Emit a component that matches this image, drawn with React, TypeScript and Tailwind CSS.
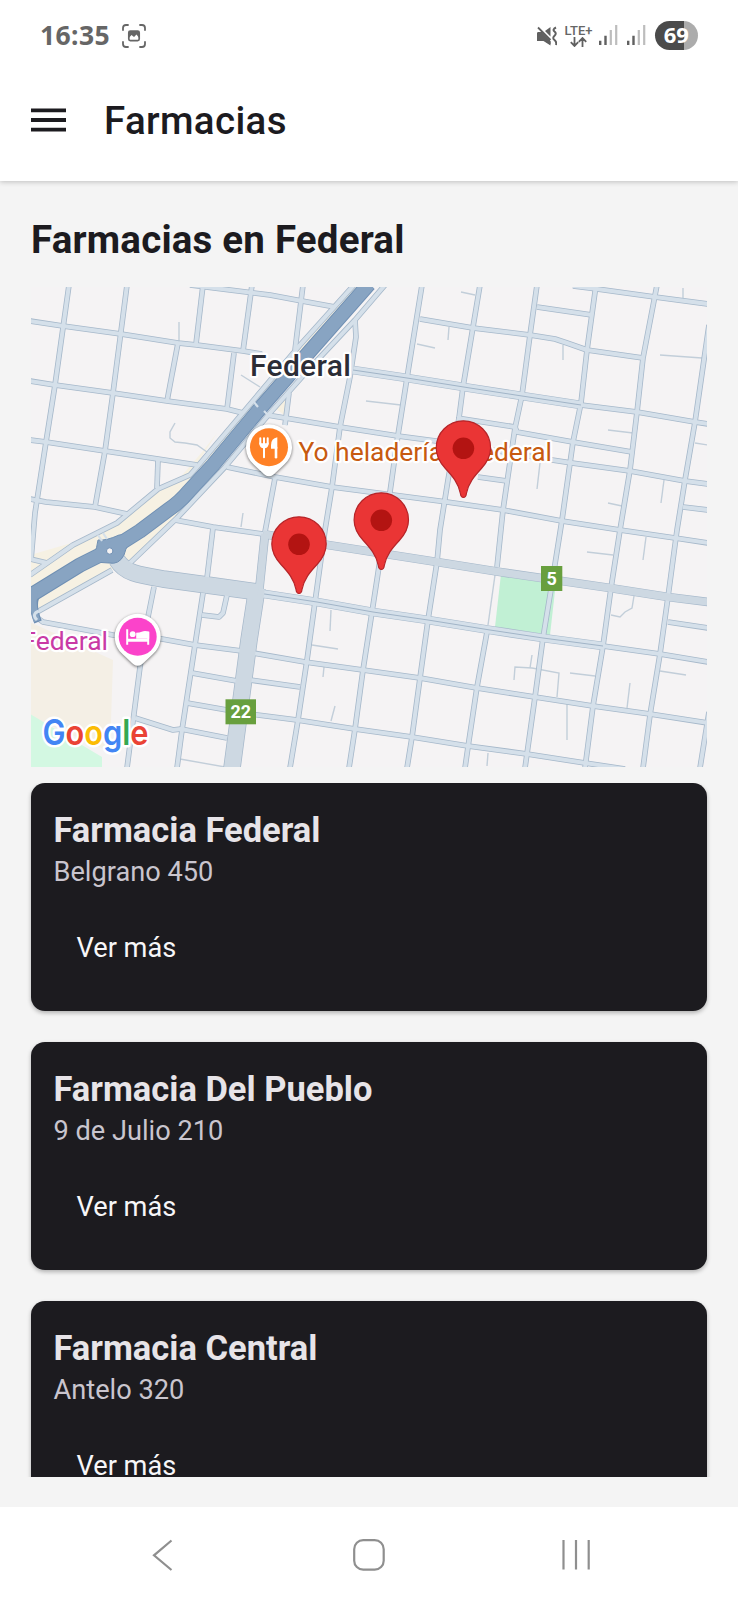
import React from "react";

const streets: string[] = [
  // north-west blocks
  "30,321 63,326 121,334 178,343 197,345 243,351 262,354",
  "190,285 230,290 270,295 302,301 335,307",
  "30,381 55,385 113,393 167,401 227,409 243,413",
  "30,440 46,442 105,451 158,459 197,465",
  "30,499 46,502 95,507 127,514",
  "69,285 55,385 46,442 35,513 31,560",
  "127,285 113,393 105,451 95,507",
  "178,343 167,401",
  "203,285 196,344",
  "252,285 243,351",
  "234,353 227,409",
  "158,460 157,488",
  "303,285 295,350",
  "30,559 47,563",
  // frontage roads
  "354,285 300,345 252,402 197,467 190,475 158,489 117,523 73,545 30,575",
  "385,285 355,320 310,368 270,413 225,467 177,518 130,563",
  "112,570 37,612 36,617 43,622 113,635 162,639 195,645 242,651",
  // long verticals
  "289,393 285,425",
  "355,320 356,337 350,377 340,427 332,487 325,530 315,602 307,660 298,720 290,768",
  "422,285 407,378 398,435 390,492 378,573 372,612 363,670 355,729 349,768",
  "480,285 463,387 459,418 448,480 440,530 437,562 428,620 420,678 412,737 407,768",
  "537,285 530,335 522,395 515,428 503,510 497,567",
  "487,632 477,687 468,747 465,768",
  "596,285 587,350 581,403 573,442 562,520 552,583 543,638 535,697 525,768",
  "657,285 643,358 637,412 630,470 620,530 611,588 603,646 593,706 585,768",
  "709,325 695,422 685,480 677,530 668,597 660,654 650,715 643,768",
  "709,712 700,768",
  "275,478 265,532",
  "213,528 207,578",
  "154,587 148,617 140,667 127,768",
  "203,593 195,645 182,730 177,768",
  "227,595 223,613 219,617 202,615",
  // long horizontals
  "573,286 597,289 655,297 708,304",
  "537,307 592,315",
  "420,319 473,328 530,335 555,339 567,343 587,350 643,358",
  "581,405 637,412 695,422 708,424",
  "267,415 340,427 398,436 436,441 480,448 552,460 572,463 630,471 685,481 708,484",
  "457,418 515,427 517,432 573,442 632,452",
  "478,477 507,481",
  "227,467 275,477 332,487 447,502 503,510 562,521 620,530 675,538 708,543",
  "683,507 708,510",
  "668,622 708,628",
  "603,646 660,654 708,662",
  "253,653 305,662 363,670 420,678 477,688 535,697 593,706 650,714 708,723",
  "192,673 237,681",
  "250,680 300,687",
  "187,703 250,714 297,720 355,729 412,737 468,746 527,754 585,763 625,769",
  "135,718 173,730 181,729 227,738",
  "175,520 213,527 263,534",
];

const doubles: string[] = [
  "353,370 407,378 470,388 522,396 581,405",
  "258,593 317,602 373,612 428,620 490,630 543,638 603,646",
];

const paths: string[] = [
  "179,322 179,342", "241,375 260,387", "175,423 170,432 170,438 175,442 185,443 197,445 207,452",
  "461,292 475,295", "417,344 435,348", "449,327 448,340", "366,401 401,405",
  "563,345 563,360", "683,288 683,298", "660,355 702,358", "608,430 633,433",
  "540,463 537,489", "608,503 622,506", "664,480 661,503", "695,443 708,445",
  "331,610 330,631", "312,645 338,649", "324,667 323,677", "335,706 331,721",
  "243,513 241,527", "587,552 613,555", "646,537 643,560",
  "634,596 632,608 625,612 620,617 611,615",
  "495,575 488,625", "514,680 515,667 532,668 559,673 557,697", "532,655 530,668",
  "570,673 595,676", "630,683 627,708", "660,671 686,675", "567,704 567,740",
  "488,753 487,766", "180,759 225,767",
];

const avenue = "M369 284L310 351L263 405L213 465L189 491Q180 502 168 510L140 531L110 550L80 565L28 597";
const routeWest = "M117 560C125 573 138 575 163 579L207 585L258 592";

function Pin({ x, y }: { x: number; y: number }) {
  return (
    <g transform={`translate(${x} ${y})`}>
      <path
        d="M0-.6C-2-.6-2.8-2.5-3-4.5C-5-15-11-22-18-29.5C-24-36-27.2-42-27.2-50A27.2 27.2 0 0 1 27.2-50C27.2-42 24-36 18-29.5C11-22 5-15 3-4.5C2.8-2.5 2-.6 0-.6Z"
        fill="#ea3535"
        stroke="#b62428"
        strokeWidth="1.2"
      />
      <circle cy="-49.7" r="10.8" fill="#b31412" />
    </g>
  );
}

function PlaceMarker({ x, y, color, children }: { x: number; y: number; color: string; children: React.ReactNode }) {
  return (
    <g transform={`translate(${x} ${y})`}>
      <g style={{ filter: "drop-shadow(0 1px 1.5px rgb(0 0 0 / .55))" }}>
        <path
          d="M0 29C-3 29-5 27-7 25L-15 17.5A23 23 0 1 1 15 17.5L7 25C5 27 3 29 0 29Z"
          fill="#fff"
        />
      </g>
      <circle r="19" fill={color} />
      {children}
    </g>
  );
}

function RouteShield({ x, y, w, label }: { x: number; y: number; w: number; label: string }) {
  return (
    <g>
      <rect x={x} y={y} width={w} height="25" fill="#689f3e" />
      <text x={x + w / 2} y={y + 18.8} textAnchor="middle" fill="#fff" className="font-[Roboto,sans-serif] text-[18px] font-bold">
        {label}
      </text>
    </g>
  );
}

function CityMap() {
  return (
    <svg viewBox="31 287 676 480" className="block h-[480px] w-[676px] bg-[#f5f3f4]">
      {/* land areas */}
      <path d="M30 622L80 645L113 660L110 752L30 716Z" fill="#f4efe5" />
      <path d="M30 714L60 732L102 757V768H30Z" fill="#d3f8e2" />
      <path d="M217 433L203 451L178 480L190 475L252 402L354 287H369L189 491L177 518L130 563L112 570L37 612H30V575V555L75 542L117 523L158 489L190 475Z" fill="#f6f1e3" />
      <path d="M290 390L275 408L284 415Z" fill="#f6f0e1" />
      <path d="M501 574L556 582L550 635L495 627Z" fill="#c1f0d4" />

      <g fill="none" stroke="#c2ced9" strokeWidth="1.4">
        {paths.map((p) => <polyline key={p} points={p} />)}
      </g>

      <g fill="none" strokeLinejoin="round">
        <g stroke="#a6b8ca" strokeWidth="5.6">
          {streets.map((p) => <polyline key={p} points={p} />)}
        </g>
        <g stroke="#a6b8ca" strokeWidth="8.8">
          {doubles.map((p) => <polyline key={p} points={p} />)}
          <polyline points="263,534 328,545 437,562 500,572 610,588 668,597 708,602" />
          <polyline points="265,534 259,592" />
        </g>
        <polyline points="257,588 249,640 232,768" stroke="#a6b8ca" strokeWidth="17.5" />
        <path d={routeWest} stroke="#a6b8ca" strokeWidth="17.5" />

        <g stroke="#d5e0ea" strokeWidth="4">
          {streets.map((p) => <polyline key={p} points={p} />)}
        </g>
        <g stroke="#d5e0ea" strokeWidth="7.4">
          {doubles.map((p) => <polyline key={p} points={p} />)}
        </g>
        <g stroke="#a1b4c7" strokeWidth="1">
          {doubles.map((p) => <polyline key={p} points={p} />)}
        </g>
        <g stroke="#cdd8e2" strokeWidth="7.4">
          <polyline points="263,534 328,545 437,562 500,572 610,588 668,597 708,602" />
          <polyline points="265,534 259,592" />
        </g>
        <polyline points="257,588 249,640 232,768" stroke="#cdd8e2" strokeWidth="16" />
        <path d={routeWest} stroke="#cdd8e2" strokeWidth="16" />

        <g stroke="#6f8fb3">
          <path d={avenue} strokeWidth="15" />
          <path d="M38 592Q30 603 38 622" strokeWidth="8" />
        </g>
        <path d="M86 562Q96 557 98 540Q106 541 119 535L136 534Q127 543 124 555Q119 565 109 563Q98 562 86 562Z" fill="#88a4c2" stroke="#6f8fb3" />
        <path d={avenue} stroke="#88a4c2" strokeWidth="13.2" />
        <path d="M35 590Q31 603 37 621" stroke="#88a4c2" strokeWidth="6.5" />
        <path d="M98 535L102 541M103 533L107 539M253 401L258 407M264 411L269 416" stroke="#d5e0ea" strokeWidth="2.2" />
        <path d="M37 620Q31 614 39 611" stroke="#d5e0ea" strokeWidth="3" />
      </g>
      <circle cx="109.7" cy="551" r="3.2" fill="#f5f3f4" stroke="#6f8fb3" />

      <RouteShield x={225.5} y={699.3} w={30.5} label="22" />
      <RouteShield x={541} y={566} w={21.3} label="5" />

      {/* labels */}
      <g strokeLinejoin="round" className="font-[Roboto,sans-serif]" style={{ paintOrder: "stroke" }}>
        <text x="250" y="375.5" textLength="101" fill="#2c2d36" stroke="#fff" strokeWidth="4.5" className="text-[30px] font-medium">Federal</text>
        <text y="460.5" fill="#c75a10" stroke="#fff" strokeWidth="4.5" className="text-[26.4px]">
          <tspan x="298.5">Yo heladería </tspan>
          <tspan x="552" textAnchor="end">Federal</tspan>
        </text>
        <text x="108" y="650" textAnchor="end" fill="#c93aa5" stroke="#fff" strokeWidth="4.5" className="text-[26.5px]">Federal</text>
      </g>

      <PlaceMarker x={269} y={447.3} color="#ff8126">
        <g fill="none" stroke="#fff" strokeLinecap="round" strokeWidth="2">
          <path d="M-8.7-9V-3.5M-5-9V-3.5M-1.3-9V-3.5M-5-1V10" />
          <path d="M-8.7-4Q-8.7 0-5 0T-1.3-4" fill="#fff" />
          <path d="M7 0V10" strokeWidth="2.6" />
        </g>
        <path d="M8.3-10Q2-9 2-2V1.5H8.3Z" fill="#fff" />
      </PlaceMarker>
      <PlaceMarker x={137.7} y={636.7} color="#fb43ca">
        <g fill="#fff">
          <path d="M-11.5-7.5H-9.5V2H9.5V-5H11.5V8H9.5V5H-9.5V8H-11.5Z" />
          <circle cx="-5" cy="-2.5" r="2.9" />
          <path d="M-1.5 1V-4Q2-4 4-5Q7-6.5 11.5-5V2H-1.5Z" />
        </g>
      </PlaceMarker>

      <text x="42.5" y="745" textLength="106" lengthAdjust="spacingAndGlyphs" stroke="#fff" strokeWidth="5" strokeLinejoin="round" className="font-[Inter,sans-serif] text-[35px] font-semibold" style={{ paintOrder: "stroke" }}>
        <tspan fill="#4285f4">G</tspan>
        <tspan fill="#ea4335">o</tspan>
        <tspan fill="#fbbc05">o</tspan>
        <tspan fill="#4285f4">g</tspan>
        <tspan fill="#34a853">l</tspan>
        <tspan fill="#ea4335">e</tspan>
      </text>

      <Pin x={463.4} y={498} />
      <Pin x={381.3} y={570} />
      <Pin x={299} y={594} />
    </svg>
  );
}

function SignalBars() {
  return (
    <svg viewBox="0 0 19 20" className="h-5 w-[19px]">
      <path d="M1.2 15.7V20M6.5 10.7V20" stroke="#606060" strokeWidth="2.4" />
      <path d="M11.8 5V20M17.2 0V20" stroke="#bdbdbd" strokeWidth="2.2" />
    </svg>
  );
}

function StatusBar() {
  return (
    <div className="flex h-[70px] items-center pl-[40px] pr-[40px] text-[#666]">
      <span className="w-[69px] whitespace-nowrap font-['Noto_Sans',sans-serif] text-[26.5px] font-bold leading-[34px] tracking-[0.4px]">16:35</span>
      <svg viewBox="0 0 24 24" className="ml-[12.5px] mt-[2px] h-6 w-6" fill="none" stroke="#666" strokeWidth="1.8" strokeLinecap="round">
        <path d="M1 6V4Q1 1 4 1H6M18 1H20Q23 1 23 4V6M23 18V20Q23 23 20 23H18M6 23H4Q1 23 1 20V18" />
        <rect x="6.8" y="7.2" width="10.4" height="9.4" rx="1.5" strokeWidth="1.7" />
        <path d="M6.8 14V7.2H17.2V14L14.5 10.5L12 13L9.5 11Z" fill="#666" stroke="none" />
      </svg>
      <div className="flex-1" />
      <svg viewBox="0 0 20 20" className="mt-px h-5 w-5">
        <path d="M0 6.5H4.5L13.5 15.5V19.5L6.5 15H0ZM13.5 1V10.5L8 5Z" fill="#606060" />
        <path d="M1 6.5H5L13 15V18L7 14H1Z" fill="#606060" stroke="#606060" />
        <path d="M1 1.5L13.5 14" stroke="#606060" strokeWidth="1.8" />
        <path d="M19 1.5Q15 3.5 17.5 5.5T17.5 9.7T17.5 14T19 19" fill="none" stroke="#606060" strokeWidth="2" />
      </svg>
      <div className="ml-[8px] flex w-[28px] flex-col items-center">
        <span className="whitespace-nowrap font-[Roboto,sans-serif] text-[13px] font-medium leading-[13px]">LTE+</span>
        <svg viewBox="0 0 17 10" className="h-[10px] w-[17px]" fill="none" stroke="#606060" strokeWidth="1.8">
          <path d="M4.5 0V9M.8 5.2L4.5 9L8.2 5.2M12.5 10V1M8.8 4.8L12.5 1L16.2 4.8" />
        </svg>
      </div>
      <div className="ml-[6px] flex gap-[9px]">
        <SignalBars />
        <SignalBars />
      </div>
      <div className="ml-[9px] flex h-[29px] w-[43.5px] items-center justify-center rounded-full bg-linear-to-r from-[#4b4b4b] from-67% to-[#acacac] to-67% pb-[3px] font-['Noto_Sans',sans-serif] text-[22px] font-bold leading-none text-white">
        69
      </div>
    </div>
  );
}

function PharmacyCard({ name, address }: { name: string; address: string }) {
  return (
    <article className="flex h-[228px] w-full shrink-0 flex-col items-start rounded-[14px] bg-[#1c1b1f] px-[22.5px] pt-[24.5px] shadow-[0_2px_4px_rgba(0,0,0,0.28)]">
      <h2 className="text-[34.5px] font-bold leading-[44px] text-[#e7e4e8]">{name}</h2>
      <p className="mt-px text-[27.2px] leading-[38px] text-[#c9c5ce]">{address}</p>
      <button className="ml-[23px] mt-[39px] text-[27.2px] leading-[36px] text-[#f7f6f8]">Ver más</button>
    </article>
  );
}

const pharmacies = [
  { name: "Farmacia Federal", address: "Belgrano 450" },
  { name: "Farmacia Del Pueblo", address: "9 de Julio 210" },
  { name: "Farmacia Central", address: "Antelo 320" },
];

export default function App() {
  return (
    <div className="flex h-[1600px] w-[738px] flex-col overflow-hidden bg-[#f4f4f4] font-[Roboto,sans-serif]">
      <header className="z-10 h-[181px] shrink-0 bg-white shadow-[0_1px_5px_rgba(0,0,0,0.22)]">
        <StatusBar />
        <div className="flex h-[100px] items-center pl-[31px]">
          <button aria-label="Menu">
            <svg viewBox="0 0 35 24" className="block h-6 w-[35px]" stroke="#1c1b1f" strokeWidth="3.8">
              <path d="M0 2.3H35M0 12H35M0 21.7H35" />
            </svg>
          </button>
          <h1 className="ml-[38px] mt-[1px] text-[38.5px] font-medium leading-[48px] tracking-[0.35px] text-[#1c1b1f]">Farmacias</h1>
        </div>
      </header>

      <main className="flex h-[1296px] shrink-0 flex-col overflow-hidden px-[31px]">
        <h2 className="mt-[34px] text-[38.5px] font-bold leading-[50px] tracking-[0.2px] text-[#1c1b1f]">Farmacias en Federal</h2>
        <div className="mt-[22px] shrink-0">
          <CityMap />
        </div>
        <div className="-mx-[31px] mt-4 flex flex-1 flex-col gap-[31px] overflow-hidden px-[31px]">
          {pharmacies.map((p) => (
            <PharmacyCard key={p.name} name={p.name} address={p.address} />
          ))}
        </div>
      </main>

      <nav className="mt-[30px] flex h-[93px] shrink-0 items-center bg-white">
        <svg viewBox="0 0 738 93" className="h-[93px] w-full" fill="none" stroke="#8f8f8f" strokeWidth="2.2">
          <path d="M171.5 33.5L154 48.3L171.5 63" />
          <rect x="354.2" y="33.2" width="29.5" height="29.5" rx="9" />
          <path d="M563.5 33V62.5M576 33V62.5M588.7 33V62.5" />
        </svg>
      </nav>
    </div>
  );
}
